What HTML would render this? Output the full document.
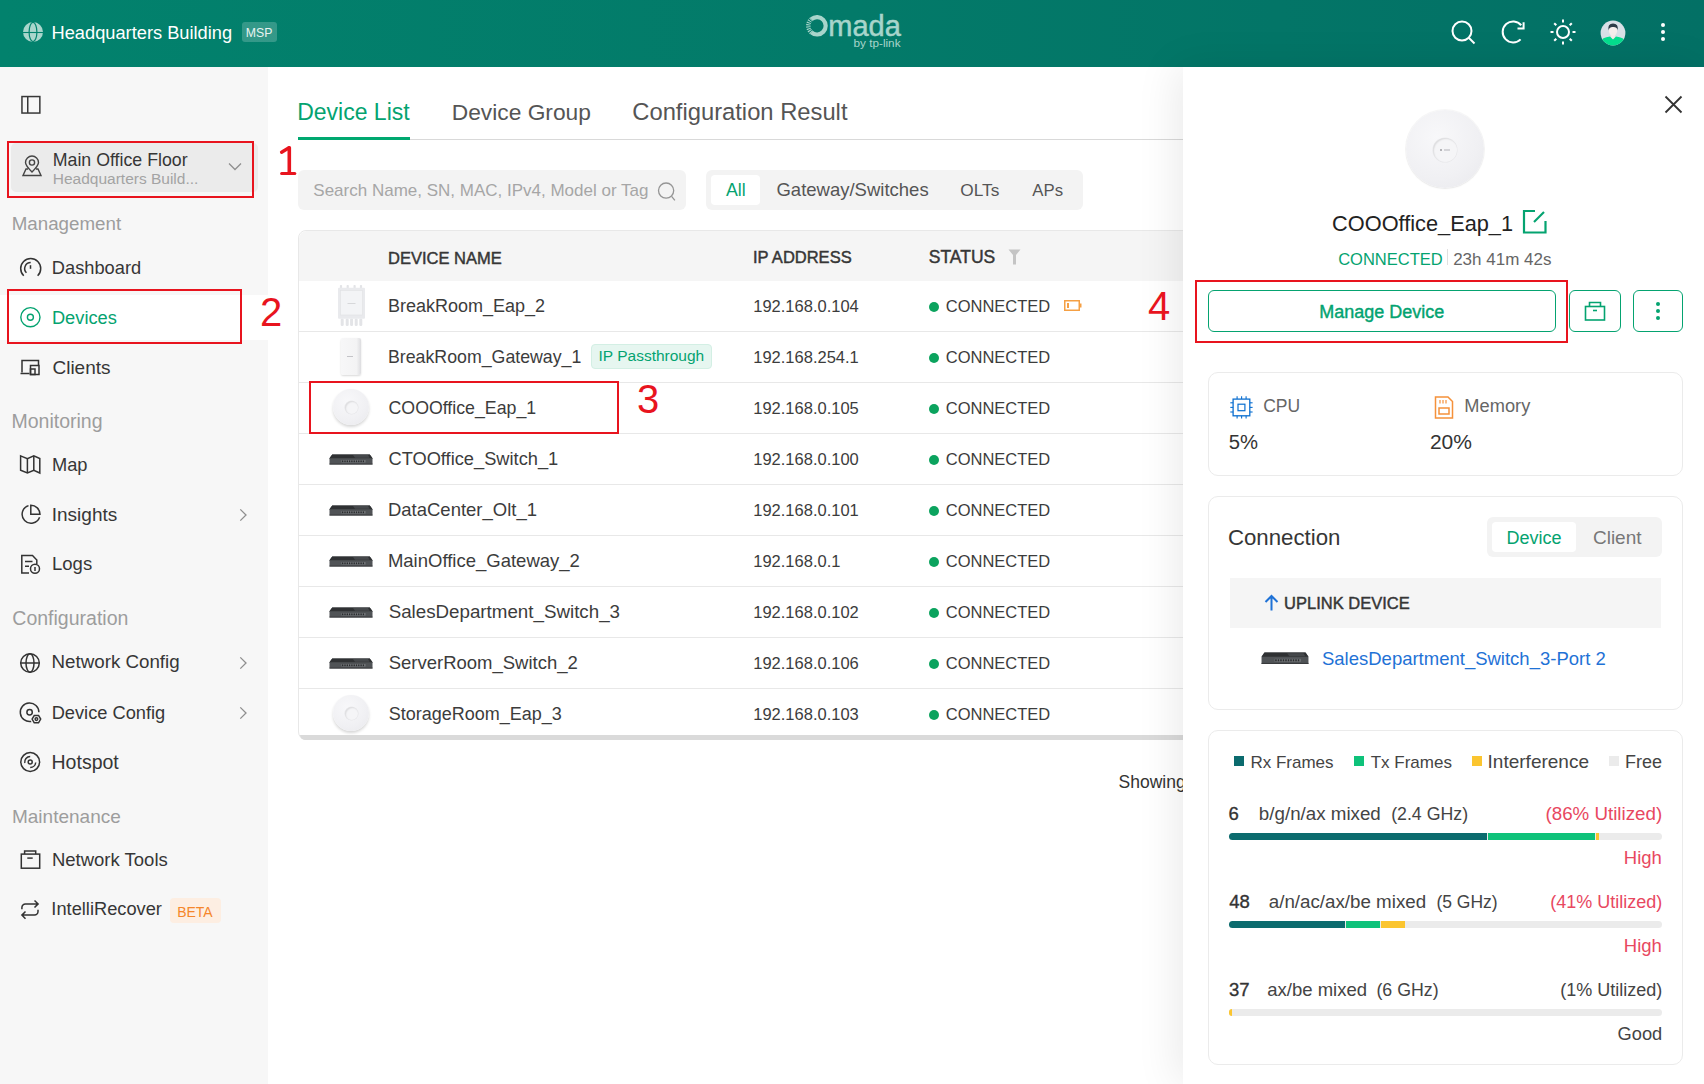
<!DOCTYPE html><html><head><meta charset="utf-8"><title>Omada Devices</title><style>
*{margin:0;padding:0;box-sizing:border-box}
html,body{width:1704px;height:1084px;overflow:hidden;background:#fff;font-family:"Liberation Sans",sans-serif}
.t{position:absolute;white-space:nowrap;line-height:1}
.r{position:absolute}
svg{position:absolute;overflow:visible}
</style></head><body>
<div class="r" style="left:0px;top:0px;width:1704px;height:67px;background:linear-gradient(90deg,#02826d 0%,#037a69 50%,#037065 100%)"></div>
<svg style="left:22px;top:21px" width="22" height="22" viewBox="0 0 22 22"><circle cx="11" cy="11" r="10" fill="#a9d6cc"/><ellipse cx="11" cy="11" rx="3.9" ry="9.6" fill="none" stroke="#02826d" stroke-width="1.2"/><line x1="1" y1="11.5" x2="21" y2="11.5" stroke="#02826d" stroke-width="1.1"/></svg>
<div class="t" style="left:51.54px;top:22px;font-size:18.25px;line-height:21px;color:#fff;font-weight:400;">Headquarters Building</div>
<div class="r" style="left:242px;top:22px;width:35px;height:20px;background:rgba(255,255,255,0.2);border-radius:3px"></div>
<div class="t" style="left:245.81px;top:26px;font-size:12.25px;line-height:14px;color:#e8f3f0;font-weight:400;">MSP</div>
<svg style="left:800px;top:10px" width="40" height="32" viewBox="0 0 40 32"><path d="M11.4 9.14 A8.7 8.7 0 1 1 11.4 22.46" fill="none" stroke="#a8d5cb" stroke-width="4.2"/><path d="M11.4 22.46 A8.7 8.7 0 0 1 11.4 9.14" fill="none" stroke="#a8d5cb" stroke-width="4.4" stroke-dasharray="1.05 0.95"/></svg>
<div class="t" style="left:828.27px;top:10px;font-size:29.00px;line-height:32px;color:#a8d5cb;font-weight:400;-webkit-text-stroke:0.5px #a8d5cb">mada</div>
<div class="t" style="left:853.50px;top:36px;font-size:11.75px;line-height:13px;color:#a8d5cb;font-weight:400;">by tp-link</div>
<svg style="left:1451px;top:20px" width="26" height="26" viewBox="0 0 26 26"><circle cx="11" cy="11" r="9.5" fill="none" stroke="#fff" stroke-width="2"/><line x1="18" y1="18" x2="23.5" y2="23.5" stroke="#fff" stroke-width="2"/></svg>
<svg style="left:1500px;top:19px" width="26" height="26" viewBox="0 0 26 26"><path d="M21.24 6.25 A10.5 10.5 0 1 0 20.6 20.4" fill="none" stroke="#fff" stroke-width="2"/><path d="M17.5 9.5 H23.6 V3.3" fill="none" stroke="#fff" stroke-width="2"/></svg>
<svg style="left:1549px;top:18px" width="28" height="28" viewBox="0 0 28 28"><circle cx="14" cy="14" r="6" fill="none" stroke="#fff" stroke-width="2"/><g stroke="#fff" stroke-width="2"><line x1="14" y1="1.5" x2="14" y2="4.5"/><line x1="14" y1="23.5" x2="14" y2="26.5"/><line x1="1.5" y1="14" x2="4.5" y2="14"/><line x1="23.5" y1="14" x2="26.5" y2="14"/><line x1="5.2" y1="5.2" x2="7.3" y2="7.3"/><line x1="20.7" y1="20.7" x2="22.8" y2="22.8"/><line x1="5.2" y1="22.8" x2="7.3" y2="20.7"/><line x1="20.7" y1="7.3" x2="22.8" y2="5.2"/></g></svg>
<svg style="left:1600px;top:19.5px" width="26" height="26" viewBox="0 0 26 26"><defs><clipPath id="av"><circle cx="13" cy="13" r="12.4"/></clipPath></defs><circle cx="13" cy="13" r="12.4" fill="#d9e0e7"/><g clip-path="url(#av)"><rect x="10.9" y="13" width="4.2" height="6" fill="#f6e9e7"/><ellipse cx="13" cy="10.8" rx="4.1" ry="4.9" fill="#f7eeec"/><path d="M0 26 V22 Q2 17.6 10 16.6 L13 19.6 L16 16.6 Q24 17.6 26 22 V26Z" fill="#04de8e"/><path d="M8.4 10.6 Q7.4 3.6 13 3.6 Q18.6 3.6 17.9 10.6 Q17.2 6.6 13 6.9 Q9.2 6.6 8.4 10.6Z" fill="#2e3c48"/></g></svg>
<div class="r" style="left:1661px;top:23px;width:4px;height:4px;background:#fff;border-radius:50%"></div>
<div class="r" style="left:1661px;top:30px;width:4px;height:4px;background:#fff;border-radius:50%"></div>
<div class="r" style="left:1661px;top:37px;width:4px;height:4px;background:#fff;border-radius:50%"></div>
<div class="r" style="left:0px;top:67px;width:268px;height:1017px;background:#f7f7f7"></div>
<svg style="left:20px;top:95px" width="20" height="19" viewBox="0 0 20 19"><rect x="1.95" y="1.55" width="17.9" height="16.5" fill="none" stroke="#383838" stroke-width="1.5"/><line x1="7.75" y1="1.55" x2="7.75" y2="18" stroke="#383838" stroke-width="1.5"/></svg>
<div class="r" style="left:11px;top:143px;width:247px;height:49px;background:#ebebeb;border-radius:5px"></div>
<svg style="left:21px;top:155px" width="22" height="22" viewBox="0 0 22 22"><path d="M11 17 C6 12 4.5 9.5 4.5 7.5 A6.5 6.5 0 0 1 17.5 7.5 C17.5 9.5 16 12 11 17Z" fill="none" stroke="#444" stroke-width="1.4"/><circle cx="11" cy="7.5" r="2.6" fill="none" stroke="#444" stroke-width="1.4"/><path d="M7 14 H5 L2 20.5 H20 L17 14 H15" fill="none" stroke="#444" stroke-width="1.4"/></svg>
<div class="t" style="left:52.78px;top:150px;font-size:17.75px;line-height:20px;color:#363636;font-weight:400;">Main Office Floor</div>
<div class="t" style="left:52.76px;top:170px;font-size:15.50px;line-height:17px;color:#a3a3a3;font-weight:400;">Headquarters Build...</div>
<svg style="left:228px;top:162px" width="14" height="9" viewBox="0 0 14 9"><path d="M1 1.5 L7 7.5 L13 1.5" fill="none" stroke="#8f8f8f" stroke-width="1.3"/></svg>
<div class="t" style="left:11.70px;top:213px;font-size:18.75px;line-height:21px;color:#9d9d9d;font-weight:400;">Management</div>
<div class="r" style="left:0px;top:295px;width:268px;height:45px;background:#fff"></div>
<svg style="left:19px;top:257px" width="22" height="22" viewBox="0 0 22 22"><path d="M4.75 18.7 A10 10 0 1 1 18.65 18.7" fill="none" stroke="#333" stroke-width="1.5"/><path d="M7.46 15.74 A6 6 0 0 1 11.7 5.5" fill="none" stroke="#333" stroke-width="1.5"/><line x1="11.5" y1="8.2" x2="11.5" y2="11.8" fill="none" stroke="#333" stroke-width="1.5"/></svg>
<div class="t" style="left:51.83px;top:257px;font-size:18.25px;line-height:21px;color:#363636;font-weight:400;">Dashboard</div>
<svg style="left:19px;top:306px" width="22" height="22" viewBox="0 0 22 22"><circle cx="11.4" cy="11.2" r="9.6" fill="none" stroke="#04a370" stroke-width="1.4"/><circle cx="11.4" cy="11.2" r="3" fill="none" stroke="#04a370" stroke-width="1.4"/></svg>
<div class="t" style="left:51.94px;top:307px;font-size:18.25px;line-height:21px;color:#04a370;font-weight:400;">Devices</div>
<svg style="left:19px;top:357px" width="22" height="22" viewBox="0 0 22 22"><path d="M3 15.5 V3.5 H19.5 V8" fill="none" stroke="#333" stroke-width="1.5"/><path d="M1.5 16.5 H10.5" fill="none" stroke="#333" stroke-width="1.5"/><rect x="11.5" y="8.5" width="8.5" height="9" fill="none" stroke="#333" stroke-width="1.5"/><rect x="11.5" y="12" width="4.5" height="5.5" fill="none" stroke="#333" stroke-width="1.5"/></svg>
<div class="t" style="left:52.45px;top:357px;font-size:19.00px;line-height:21px;color:#363636;font-weight:400;">Clients</div>
<div class="t" style="left:11.53px;top:410px;font-size:19.50px;line-height:22px;color:#9d9d9d;font-weight:400;">Monitoring</div>
<svg style="left:19px;top:455px" width="22" height="22" viewBox="0 0 22 22"><path d="M1.6 0.9 L8.4 3.6 L14.8 0.9 L20.8 3.6 V18 L14.8 15.2 L8.4 18 L1.6 15.2Z" fill="none" stroke="#333" stroke-width="1.5"/><line x1="8.4" y1="3.6" x2="8.4" y2="18" fill="none" stroke="#333" stroke-width="1.5"/><line x1="14.8" y1="0.9" x2="14.8" y2="15.2" fill="none" stroke="#333" stroke-width="1.5"/></svg>
<div class="t" style="left:52.03px;top:454px;font-size:18.25px;line-height:21px;color:#363636;font-weight:400;">Map</div>
<svg style="left:19px;top:504px" width="22" height="22" viewBox="0 0 22 22"><path d="M11.8 1.2 V10.3 H21 A9.2 9.2 0 0 0 11.8 1.2 Z" fill="none" stroke="#333" stroke-width="1.5"/><path d="M9.5 1.6 A9 9 0 1 0 20.6 13.3" fill="none" stroke="#333" stroke-width="1.5"/></svg>
<div class="t" style="left:51.78px;top:504px;font-size:19.00px;line-height:21px;color:#363636;font-weight:400;">Insights</div>
<svg style="left:237.5px;top:508.1px" width="10" height="14" viewBox="0 0 10 14"><path d="M2.3 1.4 L8 7 L2.3 12.6" fill="none" stroke="#8f8f8f" stroke-width="1.3"/></svg>
<svg style="left:19px;top:553px" width="22" height="22" viewBox="0 0 22 22"><path d="M10 20 H2.8 V2.6 H13.5 L17.8 7 V11" fill="none" stroke="#333" stroke-width="1.5"/><path d="M6 8.5 H13.5 M6 13.2 H10" fill="none" stroke="#333" stroke-width="1.5"/><circle cx="16" cy="15.8" r="4.5" fill="none" stroke="#333" stroke-width="1.5"/><line x1="16" y1="14" x2="16" y2="18" fill="none" stroke="#333" stroke-width="1.5"/></svg>
<div class="t" style="left:52.02px;top:553px;font-size:18.50px;line-height:21px;color:#363636;font-weight:400;">Logs</div>
<div class="t" style="left:12.33px;top:607px;font-size:19.50px;line-height:22px;color:#9d9d9d;font-weight:400;">Configuration</div>
<svg style="left:19px;top:652px" width="22" height="22" viewBox="0 0 22 22"><circle cx="11" cy="11" r="9.3" fill="none" stroke="#333" stroke-width="1.5"/><ellipse cx="11" cy="11" rx="4" ry="9.3" fill="none" stroke="#333" stroke-width="1.5"/><line x1="1.7" y1="11" x2="20.3" y2="11" fill="none" stroke="#333" stroke-width="1.5"/></svg>
<div class="t" style="left:51.51px;top:651px;font-size:18.75px;line-height:21px;color:#363636;font-weight:400;">Network Config</div>
<svg style="left:237.5px;top:655.9px" width="10" height="14" viewBox="0 0 10 14"><path d="M2.3 1.4 L8 7 L2.3 12.6" fill="none" stroke="#8f8f8f" stroke-width="1.3"/></svg>
<svg style="left:19px;top:702px" width="22" height="22" viewBox="0 0 22 22"><path d="M19.9 10.2 A9.3 9.3 0 1 0 12.2 19.4" fill="none" stroke="#333" stroke-width="1.5"/><circle cx="10.6" cy="10.2" r="2.7" fill="none" stroke="#333" stroke-width="1.5"/><path d="M13.1 17.1 L15.25 13.4 H19.55 L21.7 17.1 L19.55 20.8 H15.25Z" fill="none" stroke="#333" stroke-width="1.5"/><circle cx="17.4" cy="17.1" r="1.3" fill="none" stroke="#333" stroke-width="1.5"/></svg>
<div class="t" style="left:51.64px;top:702px;font-size:18.25px;line-height:21px;color:#363636;font-weight:400;">Device Config</div>
<svg style="left:237.5px;top:706.2px" width="10" height="14" viewBox="0 0 10 14"><path d="M2.3 1.4 L8 7 L2.3 12.6" fill="none" stroke="#8f8f8f" stroke-width="1.3"/></svg>
<svg style="left:19px;top:751px" width="22" height="22" viewBox="0 0 22 22"><circle cx="11.2" cy="11" r="9.4" fill="none" stroke="#333" stroke-width="1.5"/><circle cx="11.2" cy="11" r="2" fill="none" stroke="#333" stroke-width="1.5"/><path d="M11.2 5.5 A5.5 5.5 0 0 0 5.8 12" fill="none" stroke="#333" stroke-width="1.5"/><path d="M16.7 11.5 A5.5 5.5 0 0 1 11.2 16.5" fill="none" stroke="#333" stroke-width="1.5"/></svg>
<div class="t" style="left:51.54px;top:751px;font-size:19.50px;line-height:22px;color:#363636;font-weight:400;">Hotspot</div>
<div class="t" style="left:11.98px;top:806px;font-size:19.00px;line-height:21px;color:#9d9d9d;font-weight:400;">Maintenance</div>
<svg style="left:19px;top:849px" width="22" height="22" viewBox="0 0 22 22"><rect x="2.3" y="5.1" width="18.4" height="14.1" fill="none" stroke="#333" stroke-width="1.5"/><path d="M5.6 5.1 V2 H16.7 V5.1" fill="none" stroke="#333" stroke-width="1.5"/><line x1="8.3" y1="9.1" x2="13.7" y2="9.1" fill="none" stroke="#333" stroke-width="1.5"/></svg>
<div class="t" style="left:51.93px;top:849px;font-size:18.50px;line-height:21px;color:#363636;font-weight:400;">Network Tools</div>
<svg style="left:19px;top:898px" width="22" height="22" viewBox="0 0 22 22"><path d="M2.9 11.3 V9.4 A3.5 3.5 0 0 1 6.4 5.9 H19.1 M15.5 2.5 L19.1 5.9 L15.5 9.5 M19 11.7 V13.6 A3.5 3.5 0 0 1 15.5 17.1 H2.9 M6.5 13.5 L2.9 17.1 L6.5 20.7" fill="none" stroke="#333" stroke-width="1.5"/></svg>
<div class="t" style="left:51.36px;top:898px;font-size:18.25px;line-height:21px;color:#363636;font-weight:400;">IntelliRecover</div>
<div class="r" style="left:170px;top:898px;width:51px;height:25px;background:#fdeee2;border-radius:4px"></div>
<div class="t" style="left:177.18px;top:904px;font-size:14.00px;line-height:16px;color:#f5862a;font-weight:400;">BETA</div>
<div class="t" style="left:297.16px;top:99px;font-size:23.00px;line-height:26px;color:#04a370;font-weight:400;">Device List</div>
<div class="t" style="left:451.79px;top:99px;font-size:22.75px;line-height:26px;color:#555;font-weight:400;">Device Group</div>
<div class="t" style="left:632.31px;top:98px;font-size:23.75px;line-height:27px;color:#555;font-weight:400;">Configuration Result</div>
<div class="r" style="left:298px;top:139px;width:885px;height:1px;background:#d9d9d9"></div>
<div class="r" style="left:298px;top:137px;width:112px;height:3px;background:#00a870"></div>
<div class="r" style="left:298px;top:170px;width:388px;height:40px;background:#f3f3f3;border-radius:6px"></div>
<div class="t" style="left:313.32px;top:181px;font-size:17.00px;line-height:19px;color:#a6a6a6;font-weight:400;">Search Name, SN, MAC, IPv4, Model or Tag</div>
<svg style="left:657px;top:182px" width="20" height="20" viewBox="0 0 20 20"><circle cx="9.1" cy="8.6" r="7.6" fill="none" stroke="#959595" stroke-width="1.3"/><line x1="14.6" y1="14.3" x2="17.9" y2="18.3" stroke="#959595" stroke-width="1.3"/></svg>
<div class="r" style="left:706px;top:170px;width:377px;height:40px;background:#f3f3f3;border-radius:6px"></div>
<div class="r" style="left:711px;top:175px;width:49px;height:30px;background:#fff;border-radius:4px"></div>
<div class="t" style="left:725.90px;top:180px;font-size:17.75px;line-height:20px;color:#04a370;font-weight:400;">All</div>
<div class="t" style="left:776.47px;top:179px;font-size:18.50px;line-height:21px;color:#555;font-weight:400;">Gateway/Switches</div>
<div class="t" style="left:960.31px;top:180px;font-size:17.25px;line-height:20px;color:#555;font-weight:400;">OLTs</div>
<div class="t" style="left:1032.30px;top:181px;font-size:16.75px;line-height:19px;color:#555;font-weight:400;">APs</div>
<div class="r" style="left:298px;top:230px;width:900px;height:510px;border:1px solid #e8e8e8;border-radius:8px;background:#fff;overflow:hidden"></div>
<div class="r" style="left:299px;top:231px;width:899px;height:50px;background:#f5f5f5;border-radius:8px 0 0 0"></div>
<div class="t" style="left:388.07px;top:249px;font-size:16.50px;line-height:18px;color:#363636;font-weight:400;-webkit-text-stroke:0.45px #363636">DEVICE NAME</div>
<div class="t" style="left:752.92px;top:248px;font-size:16.50px;line-height:18px;color:#363636;font-weight:400;-webkit-text-stroke:0.45px #363636">IP ADDRESS</div>
<div class="t" style="left:928.80px;top:247px;font-size:17.50px;line-height:20px;color:#363636;font-weight:400;-webkit-text-stroke:0.45px #363636">STATUS</div>
<svg style="left:1008px;top:249px" width="13" height="16" viewBox="0 0 13 16"><path d="M0.5 0.5 H12.5 L8 6 V15.5 H5 V6Z" fill="#c4c4c4"/></svg>
<div class="r" style="left:299px;top:331px;width:884px;height:1px;background:#e8e8e8"></div>
<svg style="left:336px;top:284px" width="32" height="44" viewBox="0 0 32 44"><g fill="#e3e4e7"><rect x="3.9" y="1" width="2.2" height="3.5" rx="0.8"/><rect x="10.6" y="1" width="2.2" height="3.5" rx="0.8"/><rect x="17.5" y="1" width="2.2" height="3.5" rx="0.8"/><rect x="23.9" y="1" width="2.2" height="3.5" rx="0.8"/><rect x="4.7" y="34.5" width="3" height="7.5" rx="1.3"/><rect x="9.7" y="34.5" width="3" height="7.5" rx="1.3"/><rect x="14.1" y="34.5" width="3" height="7.5" rx="1.3"/><rect x="18.7" y="34.5" width="3" height="7.5" rx="1.3"/><rect x="23.3" y="34.5" width="3" height="7.5" rx="1.3"/></g><rect x="2" y="3.8" width="27" height="31" rx="1" fill="#e9eaed"/><rect x="4.5" y="6.5" width="22" height="24.5" fill="#f3f4f6" stroke="#e1e2e5" stroke-width="0.6"/><rect x="11.5" y="19" width="8" height="0.8" fill="#d0d1d4"/></svg>
<div class="t" style="left:387.96px;top:296px;font-size:18.00px;line-height:20px;color:#3c3c3c;font-weight:400;">BreakRoom_Eap_2</div>
<div class="t" style="left:753.25px;top:297px;font-size:16.50px;line-height:18px;color:#3c3c3c;font-weight:400;">192.168.0.104</div>
<div class="r" style="left:929px;top:302px;width:10px;height:10px;background:#0ba35e;border-radius:50%"></div>
<div class="t" style="left:945.78px;top:297px;font-size:16.50px;line-height:18px;color:#3c3c3c;font-weight:400;">CONNECTED</div>
<div class="r" style="left:299px;top:382px;width:884px;height:1px;background:#e8e8e8"></div>
<div class="r" style="left:341px;top:338px;width:20px;height:37px;background:linear-gradient(90deg,#f7f7f8 0%,#f3f3f4 78%,#dddde0 100%);border-radius:2px;box-shadow:0 1px 2px rgba(0,0,0,0.15)"></div><div class="r" style="left:347px;top:356px;width:6px;height:1px;background:#c4c4c8"></div>
<div class="t" style="left:387.99px;top:347px;font-size:17.75px;line-height:20px;color:#3c3c3c;font-weight:400;">BreakRoom_Gateway_1</div>
<div class="t" style="left:753.25px;top:348px;font-size:16.50px;line-height:18px;color:#3c3c3c;font-weight:400;">192.168.254.1</div>
<div class="r" style="left:929px;top:353px;width:10px;height:10px;background:#0ba35e;border-radius:50%"></div>
<div class="t" style="left:945.78px;top:348px;font-size:16.50px;line-height:18px;color:#3c3c3c;font-weight:400;">CONNECTED</div>
<div class="r" style="left:299px;top:433px;width:884px;height:1px;background:#e8e8e8"></div>
<div class="r" style="left:333.0px;top:388.5px;width:36.0px;height:36.0px;border-radius:50%;background:radial-gradient(circle at 40% 35%,#f8f8fa 0%,#f0f0f3 60%,#e8e8ec 100%);box-shadow:0 2px 3px rgba(0,0,0,0.16)"></div><div class="r" style="left:344.5px;top:400.5px;width:13.0px;height:13.0px;border-radius:50%;background:#f5f5f7;box-shadow:inset 1px 1px 1.5px rgba(0,0,0,0.10),0 0 0 0.6px rgba(0,0,0,0.05)"></div>
<div class="t" style="left:388.51px;top:398px;font-size:17.75px;line-height:20px;color:#3c3c3c;font-weight:400;">COOOffice_Eap_1</div>
<div class="t" style="left:753.25px;top:399px;font-size:16.50px;line-height:18px;color:#3c3c3c;font-weight:400;">192.168.0.105</div>
<div class="r" style="left:929px;top:404px;width:10px;height:10px;background:#0ba35e;border-radius:50%"></div>
<div class="t" style="left:945.78px;top:399px;font-size:16.50px;line-height:18px;color:#3c3c3c;font-weight:400;">CONNECTED</div>
<div class="r" style="left:299px;top:484px;width:884px;height:1px;background:#e8e8e8"></div>
<svg style="left:329px;top:453.5px" width="44" height="11" viewBox="0 0 44 11" preserveAspectRatio="none"><path d="M3.2 0.5 H40.8 L43.5 4.2 V10.5 H0.5 V4.2Z" fill="#505356"/><path d="M3.2 0.5 H40.8 L43.5 4.2 H0.5Z" fill="#2f3133"/><path d="M24 1 H39 L40.5 3.8 H26Z" fill="#55585b" opacity="0.6"/><rect x="0.5" y="9.6" width="43" height="0.9" fill="#37393b"/><rect x="12.5" y="6" width="24" height="2.6" fill="#75787b"/><g fill="#2a2c2e"><rect x="13.0" y="6.4" width="1.4" height="1.8"/><rect x="15.3" y="6.4" width="1.4" height="1.8"/><rect x="17.6" y="6.4" width="1.4" height="1.8"/><rect x="19.9" y="6.4" width="1.4" height="1.8"/><rect x="22.2" y="6.4" width="1.4" height="1.8"/><rect x="24.5" y="6.4" width="1.4" height="1.8"/><rect x="26.8" y="6.4" width="1.4" height="1.8"/><rect x="29.1" y="6.4" width="1.4" height="1.8"/><rect x="31.4" y="6.4" width="1.4" height="1.8"/><rect x="33.7" y="6.4" width="1.4" height="1.8"/></g></svg>
<div class="t" style="left:388.49px;top:448px;font-size:18.25px;line-height:21px;color:#3c3c3c;font-weight:400;">CTOOffice_Switch_1</div>
<div class="t" style="left:753.25px;top:450px;font-size:16.50px;line-height:18px;color:#3c3c3c;font-weight:400;">192.168.0.100</div>
<div class="r" style="left:929px;top:455px;width:10px;height:10px;background:#0ba35e;border-radius:50%"></div>
<div class="t" style="left:945.78px;top:450px;font-size:16.50px;line-height:18px;color:#3c3c3c;font-weight:400;">CONNECTED</div>
<div class="r" style="left:299px;top:535px;width:884px;height:1px;background:#e8e8e8"></div>
<svg style="left:329px;top:504.5px" width="44" height="11" viewBox="0 0 44 11" preserveAspectRatio="none"><path d="M3.2 0.5 H40.8 L43.5 4.2 V10.5 H0.5 V4.2Z" fill="#505356"/><path d="M3.2 0.5 H40.8 L43.5 4.2 H0.5Z" fill="#2f3133"/><path d="M24 1 H39 L40.5 3.8 H26Z" fill="#55585b" opacity="0.6"/><rect x="0.5" y="9.6" width="43" height="0.9" fill="#37393b"/><rect x="12.5" y="6" width="24" height="2.6" fill="#75787b"/><g fill="#2a2c2e"><rect x="13.0" y="6.4" width="1.4" height="1.8"/><rect x="15.3" y="6.4" width="1.4" height="1.8"/><rect x="17.6" y="6.4" width="1.4" height="1.8"/><rect x="19.9" y="6.4" width="1.4" height="1.8"/><rect x="22.2" y="6.4" width="1.4" height="1.8"/><rect x="24.5" y="6.4" width="1.4" height="1.8"/><rect x="26.8" y="6.4" width="1.4" height="1.8"/><rect x="29.1" y="6.4" width="1.4" height="1.8"/><rect x="31.4" y="6.4" width="1.4" height="1.8"/><rect x="33.7" y="6.4" width="1.4" height="1.8"/></g></svg>
<div class="t" style="left:387.92px;top:499px;font-size:18.50px;line-height:21px;color:#3c3c3c;font-weight:400;">DataCenter_Olt_1</div>
<div class="t" style="left:753.25px;top:501px;font-size:16.50px;line-height:18px;color:#3c3c3c;font-weight:400;">192.168.0.101</div>
<div class="r" style="left:929px;top:506px;width:10px;height:10px;background:#0ba35e;border-radius:50%"></div>
<div class="t" style="left:945.78px;top:501px;font-size:16.50px;line-height:18px;color:#3c3c3c;font-weight:400;">CONNECTED</div>
<div class="r" style="left:299px;top:586px;width:884px;height:1px;background:#e8e8e8"></div>
<svg style="left:329px;top:555.5px" width="44" height="11" viewBox="0 0 44 11" preserveAspectRatio="none"><path d="M3.2 0.5 H40.8 L43.5 4.2 V10.5 H0.5 V4.2Z" fill="#505356"/><path d="M3.2 0.5 H40.8 L43.5 4.2 H0.5Z" fill="#2f3133"/><path d="M24 1 H39 L40.5 3.8 H26Z" fill="#55585b" opacity="0.6"/><rect x="0.5" y="9.6" width="43" height="0.9" fill="#37393b"/><rect x="12.5" y="6" width="24" height="2.6" fill="#75787b"/><g fill="#2a2c2e"><rect x="13.0" y="6.4" width="1.4" height="1.8"/><rect x="15.3" y="6.4" width="1.4" height="1.8"/><rect x="17.6" y="6.4" width="1.4" height="1.8"/><rect x="19.9" y="6.4" width="1.4" height="1.8"/><rect x="22.2" y="6.4" width="1.4" height="1.8"/><rect x="24.5" y="6.4" width="1.4" height="1.8"/><rect x="26.8" y="6.4" width="1.4" height="1.8"/><rect x="29.1" y="6.4" width="1.4" height="1.8"/><rect x="31.4" y="6.4" width="1.4" height="1.8"/><rect x="33.7" y="6.4" width="1.4" height="1.8"/></g></svg>
<div class="t" style="left:387.92px;top:550px;font-size:18.50px;line-height:21px;color:#3c3c3c;font-weight:400;">MainOffice_Gateway_2</div>
<div class="t" style="left:753.25px;top:552px;font-size:16.50px;line-height:18px;color:#3c3c3c;font-weight:400;">192.168.0.1</div>
<div class="r" style="left:929px;top:557px;width:10px;height:10px;background:#0ba35e;border-radius:50%"></div>
<div class="t" style="left:945.78px;top:552px;font-size:16.50px;line-height:18px;color:#3c3c3c;font-weight:400;">CONNECTED</div>
<div class="r" style="left:299px;top:637px;width:884px;height:1px;background:#e8e8e8"></div>
<svg style="left:329px;top:606.5px" width="44" height="11" viewBox="0 0 44 11" preserveAspectRatio="none"><path d="M3.2 0.5 H40.8 L43.5 4.2 V10.5 H0.5 V4.2Z" fill="#505356"/><path d="M3.2 0.5 H40.8 L43.5 4.2 H0.5Z" fill="#2f3133"/><path d="M24 1 H39 L40.5 3.8 H26Z" fill="#55585b" opacity="0.6"/><rect x="0.5" y="9.6" width="43" height="0.9" fill="#37393b"/><rect x="12.5" y="6" width="24" height="2.6" fill="#75787b"/><g fill="#2a2c2e"><rect x="13.0" y="6.4" width="1.4" height="1.8"/><rect x="15.3" y="6.4" width="1.4" height="1.8"/><rect x="17.6" y="6.4" width="1.4" height="1.8"/><rect x="19.9" y="6.4" width="1.4" height="1.8"/><rect x="22.2" y="6.4" width="1.4" height="1.8"/><rect x="24.5" y="6.4" width="1.4" height="1.8"/><rect x="26.8" y="6.4" width="1.4" height="1.8"/><rect x="29.1" y="6.4" width="1.4" height="1.8"/><rect x="31.4" y="6.4" width="1.4" height="1.8"/><rect x="33.7" y="6.4" width="1.4" height="1.8"/></g></svg>
<div class="t" style="left:388.65px;top:601px;font-size:18.75px;line-height:21px;color:#3c3c3c;font-weight:400;">SalesDepartment_Switch_3</div>
<div class="t" style="left:753.25px;top:603px;font-size:16.50px;line-height:18px;color:#3c3c3c;font-weight:400;">192.168.0.102</div>
<div class="r" style="left:929px;top:608px;width:10px;height:10px;background:#0ba35e;border-radius:50%"></div>
<div class="t" style="left:945.78px;top:603px;font-size:16.50px;line-height:18px;color:#3c3c3c;font-weight:400;">CONNECTED</div>
<div class="r" style="left:299px;top:688px;width:884px;height:1px;background:#e8e8e8"></div>
<svg style="left:329px;top:657.5px" width="44" height="11" viewBox="0 0 44 11" preserveAspectRatio="none"><path d="M3.2 0.5 H40.8 L43.5 4.2 V10.5 H0.5 V4.2Z" fill="#505356"/><path d="M3.2 0.5 H40.8 L43.5 4.2 H0.5Z" fill="#2f3133"/><path d="M24 1 H39 L40.5 3.8 H26Z" fill="#55585b" opacity="0.6"/><rect x="0.5" y="9.6" width="43" height="0.9" fill="#37393b"/><rect x="12.5" y="6" width="24" height="2.6" fill="#75787b"/><g fill="#2a2c2e"><rect x="13.0" y="6.4" width="1.4" height="1.8"/><rect x="15.3" y="6.4" width="1.4" height="1.8"/><rect x="17.6" y="6.4" width="1.4" height="1.8"/><rect x="19.9" y="6.4" width="1.4" height="1.8"/><rect x="22.2" y="6.4" width="1.4" height="1.8"/><rect x="24.5" y="6.4" width="1.4" height="1.8"/><rect x="26.8" y="6.4" width="1.4" height="1.8"/><rect x="29.1" y="6.4" width="1.4" height="1.8"/><rect x="31.4" y="6.4" width="1.4" height="1.8"/><rect x="33.7" y="6.4" width="1.4" height="1.8"/></g></svg>
<div class="t" style="left:388.66px;top:652px;font-size:18.50px;line-height:21px;color:#3c3c3c;font-weight:400;">ServerRoom_Switch_2</div>
<div class="t" style="left:753.25px;top:654px;font-size:16.50px;line-height:18px;color:#3c3c3c;font-weight:400;">192.168.0.106</div>
<div class="r" style="left:929px;top:659px;width:10px;height:10px;background:#0ba35e;border-radius:50%"></div>
<div class="t" style="left:945.78px;top:654px;font-size:16.50px;line-height:18px;color:#3c3c3c;font-weight:400;">CONNECTED</div>
<div class="r" style="left:333.0px;top:694.5px;width:36.0px;height:36.0px;border-radius:50%;background:radial-gradient(circle at 40% 35%,#f8f8fa 0%,#f0f0f3 60%,#e8e8ec 100%);box-shadow:0 2px 3px rgba(0,0,0,0.16)"></div><div class="r" style="left:344.5px;top:706.5px;width:13.0px;height:13.0px;border-radius:50%;background:#f5f5f7;box-shadow:inset 1px 1px 1.5px rgba(0,0,0,0.10),0 0 0 0.6px rgba(0,0,0,0.05)"></div>
<div class="t" style="left:388.68px;top:704px;font-size:18.00px;line-height:20px;color:#3c3c3c;font-weight:400;">StorageRoom_Eap_3</div>
<div class="t" style="left:753.25px;top:705px;font-size:16.50px;line-height:18px;color:#3c3c3c;font-weight:400;">192.168.0.103</div>
<div class="r" style="left:929px;top:710px;width:10px;height:10px;background:#0ba35e;border-radius:50%"></div>
<div class="t" style="left:945.78px;top:705px;font-size:16.50px;line-height:18px;color:#3c3c3c;font-weight:400;">CONNECTED</div>
<div class="r" style="left:591px;top:344px;width:121px;height:25px;background:#e6f6f0;border:1px solid #d3efe4;border-radius:4px"></div>
<div class="t" style="left:598.51px;top:347px;font-size:15.50px;line-height:17px;color:#04a370;font-weight:400;">IP Passthrough</div>
<svg style="left:1064px;top:300px" width="18" height="11" viewBox="0 0 18 11"><rect x="0.75" y="0.75" width="14.5" height="9.5" fill="none" stroke="#f5a044" stroke-width="1.5"/><rect x="3" y="3" width="2" height="5" fill="#f5a044"/><rect x="15.5" y="3.5" width="2" height="4" fill="#f5a044"/></svg>
<div class="r" style="left:300px;top:735px;width:900px;height:5px;background:#dadada;border-radius:0 0 0 8px"></div>
<div class="t" style="left:1118.50px;top:772px;font-size:17.50px;line-height:20px;color:#333;font-weight:400;">Showing</div>
<div class="r" style="left:1183px;top:67px;width:521px;height:1017px;background:#fff;box-shadow:-6px 0 40px rgba(0,0,0,0.085)"></div>
<svg style="left:1664px;top:95px" width="19" height="19" viewBox="0 0 19 19"><path d="M1.5 1.5 L17.5 17.5 M17.5 1.5 L1.5 17.5" stroke="#333" stroke-width="1.8"/></svg>
<div class="r" style="left:1406.1px;top:109.9px;width:78.4px;height:78.4px;border-radius:50%;background:radial-gradient(circle at 40% 35%,#f8f8fa 0%,#f0f0f3 60%,#e8e8ec 100%);box-shadow:0 0 0 1px rgba(0,0,0,0.035), 0 1px 2px rgba(0,0,0,0.06)"></div><div class="r" style="left:1433.3px;top:137.6px;width:24.0px;height:24.0px;border-radius:50%;background:#f5f5f7;box-shadow:inset 1px 1px 1.5px rgba(0,0,0,0.10),0 0 0 0.6px rgba(0,0,0,0.05)"></div><div class="r" style="left:1440.3px;top:149.1px;width:10px;height:2px;background:linear-gradient(90deg,#b4b4b8 0 25%,transparent 25% 40%,#d4d4d8 40% 100%)"></div>
<div class="t" style="left:1332.11px;top:211px;font-size:21.75px;line-height:25px;color:#222;font-weight:400;">COOOffice_Eap_1</div>
<svg style="left:1522px;top:209px" width="26" height="25" viewBox="0 0 26 25"><path d="M13 2 H2 V23.5 H23.5 V12" fill="none" stroke="#04a370" stroke-width="2.2"/><path d="M12 13 L22 3" stroke="#04a370" stroke-width="2.2"/></svg>
<div class="t" style="left:1338.18px;top:250px;font-size:16.50px;line-height:18px;color:#04a370;font-weight:400;">CONNECTED</div>
<div class="r" style="left:1447px;top:249px;width:1px;height:16px;background:#e0e0e0"></div>
<div class="t" style="left:1453.15px;top:250px;font-size:17.00px;line-height:19px;color:#666;font-weight:400;">23h 41m 42s</div>
<div class="r" style="left:1208px;top:290px;width:348px;height:42px;border:1.5px solid #04a370;border-radius:6px"></div>
<div class="t" style="left:1319.16px;top:302px;font-size:18.00px;line-height:20px;color:#04a370;font-weight:400;-webkit-text-stroke:0.4px #04a370">Manage Device</div>
<div class="r" style="left:1569px;top:290px;width:52px;height:42px;border:1.5px solid #04a370;border-radius:6px"></div>
<svg style="left:1583px;top:300px" width="24" height="22" viewBox="0 0 24 22"><rect x="2.5" y="6.5" width="19" height="13.5" fill="none" stroke="#04a370" stroke-width="1.6"/><path d="M6.5 6.5 V2.5 H17.5 V6.5" fill="none" stroke="#04a370" stroke-width="1.6"/><line x1="10" y1="10.5" x2="14" y2="10.5" stroke="#04a370" stroke-width="1.6"/></svg>
<div class="r" style="left:1633px;top:290px;width:50px;height:42px;border:1.5px solid #04a370;border-radius:6px"></div>
<div class="r" style="left:1656px;top:302px;width:4px;height:4px;background:#04a370;border-radius:50%"></div>
<div class="r" style="left:1656px;top:309px;width:4px;height:4px;background:#04a370;border-radius:50%"></div>
<div class="r" style="left:1656px;top:316px;width:4px;height:4px;background:#04a370;border-radius:50%"></div>
<div class="r" style="left:1208px;top:372px;width:475px;height:104px;border:1px solid #ebebeb;border-radius:10px"></div>
<svg style="left:1229px;top:395px" width="24" height="24" viewBox="0 0 24 24"><rect x="4.1" y="4.1" width="16.7" height="16.7" fill="none" stroke="#0b6fd0" stroke-width="1.3"/><rect x="9" y="9.2" width="6.9" height="6.5" fill="none" stroke="#0b6fd0" stroke-width="1.2"/><g stroke="#0b6fd0" stroke-width="1.1"><line x1="8.1" y1="1.3" x2="8.1" y2="4.1"/><line x1="8.1" y1="20.8" x2="8.1" y2="23.6"/><line x1="12.6" y1="1.3" x2="12.6" y2="4.1"/><line x1="12.6" y1="20.8" x2="12.6" y2="23.6"/><line x1="17.1" y1="1.3" x2="17.1" y2="4.1"/><line x1="17.1" y1="20.8" x2="17.1" y2="23.6"/><line x1="1.3" y1="7.8" x2="4.1" y2="7.8"/><line x1="20.8" y1="7.8" x2="23.6" y2="7.8"/><line x1="1.3" y1="12.4" x2="4.1" y2="12.4"/><line x1="20.8" y1="12.4" x2="23.6" y2="12.4"/><line x1="1.3" y1="17" x2="4.1" y2="17"/><line x1="20.8" y1="17" x2="23.6" y2="17"/></g></svg>
<div class="t" style="left:1263.13px;top:396px;font-size:17.50px;line-height:20px;color:#666;font-weight:400;">CPU</div>
<div class="t" style="left:1228.79px;top:431px;font-size:20.25px;line-height:22px;color:#333;font-weight:400;">5%</div>
<svg style="left:1434px;top:396px" width="20" height="23" viewBox="0 0 20 23"><path d="M1.5 1 H14 L18.5 5.5 V22 H1.5Z" fill="none" stroke="#f5913a" stroke-width="1.5"/><rect x="5" y="12" width="10" height="6" fill="none" stroke="#f5913a" stroke-width="1.5"/><g stroke="#f5913a" stroke-width="1.2"><line x1="6" y1="4" x2="6" y2="7.5"/><line x1="9" y1="4" x2="9" y2="7.5"/><line x1="12" y1="4" x2="12" y2="7.5"/></g></svg>
<div class="t" style="left:1464.35px;top:395px;font-size:18.25px;line-height:21px;color:#666;font-weight:400;">Memory</div>
<div class="t" style="left:1429.95px;top:430px;font-size:21.00px;line-height:23px;color:#333;font-weight:400;">20%</div>
<div class="r" style="left:1208px;top:496px;width:475px;height:214px;border:1px solid #ebebeb;border-radius:10px"></div>
<div class="t" style="left:1227.88px;top:525px;font-size:22.25px;line-height:25px;color:#363636;font-weight:400;">Connection</div>
<div class="r" style="left:1487px;top:517px;width:175px;height:40px;background:#f3f3f3;border-radius:6px"></div>
<div class="r" style="left:1492px;top:522px;width:84px;height:30px;background:#fff;border-radius:4px"></div>
<div class="t" style="left:1506.56px;top:528px;font-size:18.00px;line-height:20px;color:#04a370;font-weight:400;">Device</div>
<div class="t" style="left:1592.96px;top:527px;font-size:19.00px;line-height:21px;color:#777;font-weight:400;">Client</div>
<div class="r" style="left:1230px;top:578px;width:431px;height:50px;background:#f5f5f5"></div>
<svg style="left:1264px;top:594px" width="15" height="17" viewBox="0 0 15 17"><path d="M7.5 16.5 V2 M1.5 8 L7.5 2 L13.5 8" fill="none" stroke="#1f72d6" stroke-width="2"/></svg>
<div class="t" style="left:1284.05px;top:594px;font-size:16.50px;line-height:18px;color:#363636;font-weight:400;-webkit-text-stroke:0.45px #363636">UPLINK DEVICE</div>
<svg style="left:1261px;top:652px" width="48" height="12.5" viewBox="0 0 44 11" preserveAspectRatio="none"><path d="M3.2 0.5 H40.8 L43.5 4.2 V10.5 H0.5 V4.2Z" fill="#505356"/><path d="M3.2 0.5 H40.8 L43.5 4.2 H0.5Z" fill="#2f3133"/><path d="M24 1 H39 L40.5 3.8 H26Z" fill="#55585b" opacity="0.6"/><rect x="0.5" y="9.6" width="43" height="0.9" fill="#37393b"/><rect x="12.5" y="6" width="24" height="2.6" fill="#75787b"/><g fill="#2a2c2e"><rect x="13.0" y="6.4" width="1.4" height="1.8"/><rect x="15.3" y="6.4" width="1.4" height="1.8"/><rect x="17.6" y="6.4" width="1.4" height="1.8"/><rect x="19.9" y="6.4" width="1.4" height="1.8"/><rect x="22.2" y="6.4" width="1.4" height="1.8"/><rect x="24.5" y="6.4" width="1.4" height="1.8"/><rect x="26.8" y="6.4" width="1.4" height="1.8"/><rect x="29.1" y="6.4" width="1.4" height="1.8"/><rect x="31.4" y="6.4" width="1.4" height="1.8"/><rect x="33.7" y="6.4" width="1.4" height="1.8"/></g></svg>
<div class="t" style="left:1321.96px;top:648px;font-size:18.50px;line-height:21px;color:#1f72d6;font-weight:400;">SalesDepartment_Switch_3-Port 2</div>
<div class="r" style="left:1208px;top:730px;width:475px;height:335px;border:1px solid #ebebeb;border-radius:10px"></div>
<div class="r" style="left:1234px;top:756px;width:10px;height:10px;background:#0b6b6e"></div>
<div class="t" style="left:1250.44px;top:753px;font-size:17.00px;line-height:19px;color:#444;font-weight:400;">Rx Frames</div>
<div class="r" style="left:1354px;top:756px;width:10px;height:10px;background:#0ec27a"></div>
<div class="t" style="left:1370.66px;top:753px;font-size:17.00px;line-height:19px;color:#444;font-weight:400;">Tx Frames</div>
<div class="r" style="left:1472px;top:756px;width:10px;height:10px;background:#fbc52f"></div>
<div class="t" style="left:1487.59px;top:751px;font-size:19.00px;line-height:21px;color:#444;font-weight:400;">Interference</div>
<div class="r" style="left:1609px;top:756px;width:10px;height:10px;background:#ebebeb"></div>
<div class="t" style="left:1625.06px;top:752px;font-size:18.00px;line-height:20px;color:#444;font-weight:400;">Free</div>
<div class="t" style="left:1228.58px;top:803px;font-size:18.50px;line-height:21px;color:#333;font-weight:400;-webkit-text-stroke:0.35px #333">6</div>
<div class="t" style="left:1258.87px;top:803px;font-size:18.75px;line-height:21px;color:#444;font-weight:400;">b/g/n/ax mixed</div>
<div class="t" style="left:1391.14px;top:804px;font-size:17.75px;line-height:20px;color:#444;font-weight:400;">(2.4 GHz)</div>
<div class="t" style="left:1545.48px;top:803px;font-size:18.75px;line-height:21px;color:#e8485f;font-weight:400;">(86% Utilized)</div>
<div class="r" style="left:1229px;top:833px;width:433px;height:7px;background:#ebebeb;border-radius:4px;overflow:hidden"></div>
<div class="r" style="left:1229px;top:833px;width:258px;height:7px;background:#0b6b6e;border-radius:4px 0 0 4px"></div>
<div class="r" style="left:1488px;top:833px;width:107px;height:7px;background:#0ec27a"></div>
<div class="r" style="left:1596px;top:833px;width:3px;height:7px;background:#fbc52f"></div>
<div class="t" style="left:1623.81px;top:847px;font-size:18.50px;line-height:21px;color:#e8485f;font-weight:400;">High</div>
<div class="t" style="left:1229.13px;top:891px;font-size:18.50px;line-height:21px;color:#333;font-weight:400;-webkit-text-stroke:0.35px #333">48</div>
<div class="t" style="left:1268.75px;top:891px;font-size:18.75px;line-height:21px;color:#444;font-weight:400;">a/n/ac/ax/be mixed</div>
<div class="t" style="left:1436.45px;top:892px;font-size:17.50px;line-height:20px;color:#444;font-weight:400;">(5 GHz)</div>
<div class="t" style="left:1550.32px;top:892px;font-size:18.00px;line-height:20px;color:#e8485f;font-weight:400;">(41% Utilized)</div>
<div class="r" style="left:1229px;top:921px;width:433px;height:7px;background:#ebebeb;border-radius:4px;overflow:hidden"></div>
<div class="r" style="left:1229px;top:921px;width:116px;height:7px;background:#0b6b6e;border-radius:4px 0 0 4px"></div>
<div class="r" style="left:1346px;top:921px;width:34px;height:7px;background:#0ec27a"></div>
<div class="r" style="left:1381px;top:921px;width:24px;height:7px;background:#fbc52f"></div>
<div class="t" style="left:1623.81px;top:935px;font-size:18.50px;line-height:21px;color:#e8485f;font-weight:400;">High</div>
<div class="t" style="left:1228.94px;top:979px;font-size:18.50px;line-height:21px;color:#333;font-weight:400;-webkit-text-stroke:0.35px #333">37</div>
<div class="t" style="left:1267.26px;top:979px;font-size:18.50px;line-height:21px;color:#444;font-weight:400;">ax/be mixed</div>
<div class="t" style="left:1376.44px;top:980px;font-size:17.75px;line-height:20px;color:#444;font-weight:400;">(6 GHz)</div>
<div class="t" style="left:1560.32px;top:980px;font-size:18.00px;line-height:20px;color:#444;font-weight:400;">(1% Utilized)</div>
<div class="r" style="left:1229px;top:1009px;width:433px;height:7px;background:#ebebeb;border-radius:4px;overflow:hidden"></div>
<div class="r" style="left:1229px;top:1009px;width:3px;height:7px;background:#fbc52f;border-radius:4px 0 0 4px"></div>
<div class="t" style="left:1617.59px;top:1023px;font-size:18.25px;line-height:21px;color:#444;font-weight:400;">Good</div>
<div class="r" style="left:7px;top:141px;width:247px;height:57px;border:2px solid #e8141e"></div>
<div class="r" style="left:7px;top:289px;width:235px;height:55px;border:2px solid #e8141e"></div>
<div class="r" style="left:309px;top:381px;width:310px;height:53px;border:2px solid #e8141e"></div>
<div class="r" style="left:1195px;top:280px;width:373px;height:63px;border:2px solid #e8141e"></div>
<svg style="left:279px;top:146px" width="18" height="30" viewBox="0 0 18 30"><g fill="none" stroke="#e8141e" stroke-linecap="round"><path d="M10.3 1.8 V27" stroke-width="3.6"/><path d="M10 1.8 L2.6 6.2" stroke-width="3.4"/><path d="M2.6 27.4 H15.8" stroke-width="3"/></g></svg>
<div class="t" style="left:260.00px;top:290px;font-size:40.00px;line-height:44px;color:#e8141e;font-weight:400;">2</div>
<div class="t" style="left:637.00px;top:377px;font-size:40.00px;line-height:44px;color:#e8141e;font-weight:400;">3</div>
<div class="t" style="left:1148.00px;top:284px;font-size:40.00px;line-height:44px;color:#e8141e;font-weight:400;">4</div>
</body></html>
